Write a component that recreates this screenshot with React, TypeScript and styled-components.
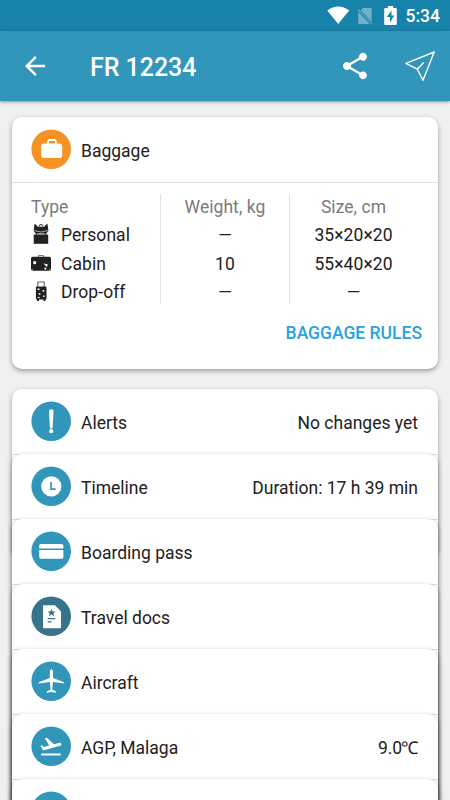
import React from 'react';
import styled, { createGlobalStyle } from 'styled-components';

const GlobalStyle = createGlobalStyle`
  * { box-sizing: border-box; }
  html, body { margin: 0; padding: 0; background: #f0f0f1; }
  body { overflow: hidden; font-family: Roboto, "Liberation Sans", sans-serif; }
`;

const Screen = styled.div`
  width: 450px;
  height: 800px;
  overflow: hidden;
  display: flex;
  flex-direction: column;
  background: #f0f0f1;
  color: #212121;
  font-size: 17.5px;
  line-height: 24px;
  svg { display: block; flex: none; }
`;

const StatusBar = styled.div`
  height: 31px;
  flex: none;
  display: flex;
  align-items: center;
  justify-content: flex-end;
  padding: 0 10px 0 0;
  background: #1783aa;
  color: #fff;
`;

const Clock = styled.span`
  margin-left: 9px;
  font-size: 17.5px;
  font-weight: 500;
  line-height: 31px;
  padding-top: 1px;
`;

const Toolbar = styled.header`
  height: 70px;
  flex: none;
  display: flex;
  align-items: center;
  padding: 0 14px 0 20px;
  background: #3296bb;
  color: #fff;
  box-shadow: 0 1px 3px rgba(0, 0, 0, 0.42);
`;

const Title = styled.h1`
  flex: 1;
  margin: 3px 0 0 40px;
  font-size: 25px;
  font-weight: 500;
  line-height: 32px;
  letter-spacing: -0.05px;
`;

const IconButton = styled.button<{ $gap?: number }>`
  border: 0;
  padding: 0;
  margin-left: ${(p) => p.$gap ?? 0}px;
  background: none;
  color: inherit;
`;

const Content = styled.main`
  flex: 1;
  display: flex;
  flex-direction: column;
  gap: 20px;
  padding: 16px 12px 0;
`;

const Card = styled.section<{ $height: number }>`
  height: ${(p) => p.$height}px;
  flex: none;
  background: #fff;
  border-radius: 10px;
  box-shadow: 0 2px 5px rgba(0, 0, 0, 0.36);
`;

const Stack = styled.div`
  display: flex;
  flex-direction: column;
`;

const StackedCard = styled(Card)`
  margin-bottom: ${(p) => 65 - p.$height}px;
`;

const CardHeader = styled.div`
  height: 66px;
  display: flex;
  align-items: center;
  gap: 10px;
  padding: 0 20px 0 19px;
  border-bottom: 1px solid #dedede;
`;

const Label = styled.span`
  flex: 1;
  margin-top: 3px;
`;

const Value = styled.span`
  margin-top: 3px;
`;

const Degree = styled.span`
  margin-left: -1px;
  letter-spacing: -1.2px;
  margin-right: 1px;
`;

const Table = styled.div`
  display: grid;
  grid-template-columns: 129px 129px 128px;
  grid-template-rows: 110px;
  height: 110px;
  margin: 11px 21px 0 19px;
`;

const Column = styled.div<{ $first?: boolean }>`
  display: flex;
  flex-direction: column;
  align-items: ${(p) => (p.$first ? 'flex-start' : 'center')};
  border-left: ${(p) => (p.$first ? '0' : '1px solid #e4e4e4')};
`;

const Cell = styled.div<{ $head?: boolean }>`
  height: 28.65px;
  flex: none;
  padding-top: 1px;
  display: flex;
  align-items: center;
  color: ${(p) => (p.$head ? '#7b7b7b' : '#212121')};
  letter-spacing: 0.05px;
  &:first-child { margin-top: -2.3px; }
`;

const BagIcon = styled.span`
  width: 20px;
  margin: -2.5px 10px 0 0;
`;

const Actions = styled.div`
  display: flex;
  justify-content: flex-end;
  padding: 17px 16px 0;
`;

const LinkButton = styled.button`
  border: 0;
  padding: 0;
  background: none;
  color: #28a3df;
  font: 500 17.5px/24px Roboto, "Liberation Sans", sans-serif;
`;

const BadgeSvg = styled.svg`
  margin-top: -1px;
`;

const Badge = ({ color = '#3296bb', children }: { color?: string; children: React.ReactNode }) => (
  <BadgeSvg width="40" height="40" viewBox="-0.2 -0.2 40 40" fill="#fff">
    <circle cx="20" cy="20" r="19.8" fill={color} />
    {children}
  </BadgeSvg>
);

const BaggageBadge = () => (
  <Badge color="#f49323">
    <path d="M16.8 15v-3l1.2-1.2h5.5l1.2 1.2v3" fill="none" stroke="#fff" strokeWidth="1.8" />
    <rect x="10" y="14.4" width="21" height="14.5" rx="2.8" />
  </Badge>
);

const AlertBadge = () => (
  <Badge>
    <path d="M17.8 9.6Q17.8 8 20 8Q22.3 8 22.3 9.6L21.5 25.5Q21.3 27.5 20 27.5Q18.8 27.5 18.6 25.5Z" />
    <circle cx="20" cy="30" r="2.1" />
  </Badge>
);

const ClockBadge = () => (
  <Badge>
    <circle cx="20.1" cy="20.2" r="10.1" />
    <path d="M19.8 15.7v7.2h4.6" fill="none" stroke="#3296bb" strokeWidth="1.7" />
  </Badge>
);

const PassBadge = () => (
  <Badge>
    <path d="M8 17.3v-2.8q0-1.8 1.8-1.8h20.6q1.8 0 1.8 1.8v2.8zM8 18.7h24.2v7q0 1.8-1.8 1.8H9.8q-1.8 0-1.8-1.8z" />
  </Badge>
);

const DocsBadge = () => (
  <Badge color="#377389">
    <path d="M12.6 9h11.2l6 6.3v15.9q0 .8-.8.8H12.6q-.8 0-.8-.8V9.8q0-.8.8-.8z" />
    <path d="M20.300 12.500l1.100 2.700 2.900.1-2.200 1.900.8 2.800-2.600-1.600-2.600 1.600.8-2.800-2.200-1.900 2.900-.1z" fill="#377389" />
    <path d="M16.500 22.500h7.400M16.500 25.700h3.800" stroke="#377389" strokeWidth="1.200" />
  </Badge>
);

const PlaneBadge = () => (
  <Badge>
    <path d="M20.200 8c1 0 1.600 1.600 1.600 3.400v5.400l10.400 3.900q.8.400.8 1.500l-11.300-1.500-.7 7.600 3.800 2v1.200l-4.600-.8-4.600.8v-1.200l3.800-2-.7-7.600L7.400 22.200q0-1.100.8-1.500l10.400-3.900v-5.400c0-1.800.6-3.400 1.600-3.400z" />
  </Badge>
);

const TakeoffBadge = () => (
  <Badge>
    <path transform="translate(7.400 7.800) scale(1.030)" d="M2.500 19h19v1.800h-19zm19.570-9.360c-.21-.8-1.040-1.280-1.840-1.060L14.920 10l-6.900-6.430-1.930.51 4.140 7.170-4.970 1.330-1.970-1.540-1.450.39 1.820 3.160.77 1.330 1.600-.43 5.310-1.420 4.350-1.160L21 11.490c.81-.23 1.280-1.050 1.070-1.850z" />
  </Badge>
);

const StatusIcons = () => (
  <svg width="70" height="31" viewBox="327 0 70 31" fill="#fff">
    <path d="M338.200 24L327.200 10.600Q338.200 2.600 349.200 10.600Z" />
    <path d="M363 8H371.600V21.500L360.600 9.900ZM358.200 11.700L369.900 24H358.200Z" opacity=".38" />
    <path d="M358.300 9.500L372.300 23.900" stroke="#fff" strokeWidth="1.100" opacity=".3" />
    <path fillRule="evenodd" d="M387.800 8V6h5.400v2h2.400q1.200 0 1.200 1.200v14.600q0 1.200-1.200 1.200h-10.200q-1.200 0-1.200-1.200V9.200q0-1.200 1.200-1.200zM391.500 10.500L386.800 17H390V22.500L394.300 15.500H391.500Z" />
  </svg>
);

const BackIcon = () => (
  <svg width="30" height="30" viewBox="0 0 24 24" fill="currentColor">
    <path d="M20 11H7.830l5.590-5.590L12 4l-8 8 8 8 1.410-1.410L7.830 13H20v-2z" />
  </svg>
);

const ShareIcon = () => (
  <svg width="32" height="32" viewBox="0 0 24 24" fill="currentColor">
    <path d="M18 16.080c-.76 0-1.440.3-1.960.77L8.910 12.700c.05-.23.09-.46.09-.7s-.04-.47-.09-.7l7.050-4.110c.54.5 1.250.81 2.040.81 1.660 0 3-1.340 3-3s-1.340-3-3-3-3 1.340-3 3c0 .24.04.47.09.7L8.040 9.810C7.500 9.310 6.790 9 6 9c-1.660 0-3 1.340-3 3s1.340 3 3 3c.79 0 1.500-.31 2.040-.81l7.120 4.160c-.05.21-.08.43-.08.65 0 1.610 1.310 2.920 2.920 2.920s2.920-1.310 2.920-2.920-1.310-2.920-2.920-2.920z" />
  </svg>
);

const SendIcon = () => (
  <svg width="32" height="32" viewBox="404 50 32 32" fill="none" stroke="#fff" strokeWidth="1.400" strokeLinejoin="round">
    <path d="M405.900 63.400L434.200 52L423 80.200L417.300 69.200ZM417.300 69.200L423.700 62.600" />
  </svg>
);

const BackpackIcon = () => (
  <svg width="20" height="22" viewBox="0 0 20 22" fill="#212121">
    <path d="M3.500.8l1.900 1.200 1.200 1.700h6.800l1.200-1.700L16.500.8l.9 7.300-2 2.500H4.600l-2-2.500z" />
    <path d="M8 3.500Q8 1.600 10 1.600T12 3.500" fill="none" stroke="#212121" />
    <path d="M2.700 11.500h14.500v9.300H2.700z" />
    <path d="M3 7.600Q10 10.400 17 7.600" fill="none" stroke="#fff" strokeWidth=".6" />
    <path d="M5.700 10v3.500M14.300 10v3.500" stroke="#212121" />
  </svg>
);

const SuitcaseIcon = () => (
  <svg width="20" height="22" viewBox="0 0 20 22" fill="#212121">
    <path d="M7.500 5V3.500h5V5" fill="none" stroke="#777" />
    <rect x="0" y="4.800" width="20" height="14" rx="1.600" />
    <g fill="#fff">
      <circle cx="3.700" cy="10.700" r="1.600" />
      <path d="M12.500 11.500l4.200.7-.6 2.700-1.300-.8z" />
      <circle cx="14.400" cy="16.600" r="1.100" />
      <path d="M.6 17.300h1v1h-1zM18.400 17.300h1v1h-1z" />
    </g>
  </svg>
);

const TrolleyIcon = () => (
  <svg width="20" height="22" viewBox="0 0 20 22" fill="#212121">
    <path d="M6.800 8V2h6.400V8" fill="none" stroke="#666" strokeWidth="1.100" />
    <rect x="4.900" y="6.500" width="10.600" height="13" rx="1" />
    <path d="M6 19h2v2H6zM12.500 19h2v2h-2z" />
    <path d="M6.500 8.500h2v1.500h-2zM11.500 10l2 .5-.5 1.500-1.500-.5zM8 13l1.800.8-.8 1.200-1.500-.7zM12 15.500h1.500V17H12zM6.700 17h2v1h-2z" fill="#fff" />
  </svg>
);

const bags = [
  { name: 'Personal', Icon: BackpackIcon, weight: '—', size: '35×20×20' },
  { name: 'Cabin', Icon: SuitcaseIcon, weight: '10', size: '55×40×20' },
  { name: 'Drop-off', Icon: TrolleyIcon, weight: '—', size: '—' },
];

const sections: { name: string; Icon: React.FC; height: number; value?: React.ReactNode }[] = [
  { name: 'Alerts', Icon: AlertBadge, height: 168, value: 'No changes yet' },
  { name: 'Timeline', Icon: ClockBadge, height: 380, value: 'Duration: 17 h 39 min' },
  { name: 'Boarding pass', Icon: PassBadge, height: 320 },
  { name: 'Travel docs', Icon: DocsBadge, height: 320 },
  { name: 'Aircraft', Icon: PlaneBadge, height: 320 },
  { name: 'AGP, Malaga', Icon: TakeoffBadge, height: 320, value: <>9.0<Degree>℃</Degree></> },
  { name: '', Icon: TakeoffBadge, height: 320 },
];

export default function App() {
  return (
    <Screen>
      <GlobalStyle />
      <StatusBar>
        <StatusIcons />
        <Clock>5:34</Clock>
      </StatusBar>
      <Toolbar>
        <IconButton aria-label="Back"><BackIcon /></IconButton>
        <Title>FR 12234</Title>
        <IconButton aria-label="Share"><ShareIcon /></IconButton>
        <IconButton aria-label="Send" $gap={33}><SendIcon /></IconButton>
      </Toolbar>
      <Content>
        <Card $height={252}>
          <CardHeader>
            <BaggageBadge />
            <Label>Baggage</Label>
          </CardHeader>
          <Table>
            <Column $first>
              <Cell $head>Type</Cell>
              {bags.map(({ name, Icon }) => (
                <Cell key={name}><BagIcon><Icon /></BagIcon>{name}</Cell>
              ))}
            </Column>
            <Column>
              <Cell $head>Weight, kg</Cell>
              {bags.map((b) => <Cell key={b.name}>{b.weight}</Cell>)}
            </Column>
            <Column>
              <Cell $head>Size, cm</Cell>
              {bags.map((b) => <Cell key={b.name}>{b.size}</Cell>)}
            </Column>
          </Table>
          <Actions><LinkButton>BAGGAGE RULES</LinkButton></Actions>
        </Card>
        <Stack>
          {sections.map(({ name, Icon, height, value }, i) => (
            <StackedCard $height={height} key={i}>
              <CardHeader>
                <Icon />
                <Label>{name}</Label>
                {value && <Value>{value}</Value>}
              </CardHeader>
            </StackedCard>
          ))}
        </Stack>
      </Content>
    </Screen>
  );
}
